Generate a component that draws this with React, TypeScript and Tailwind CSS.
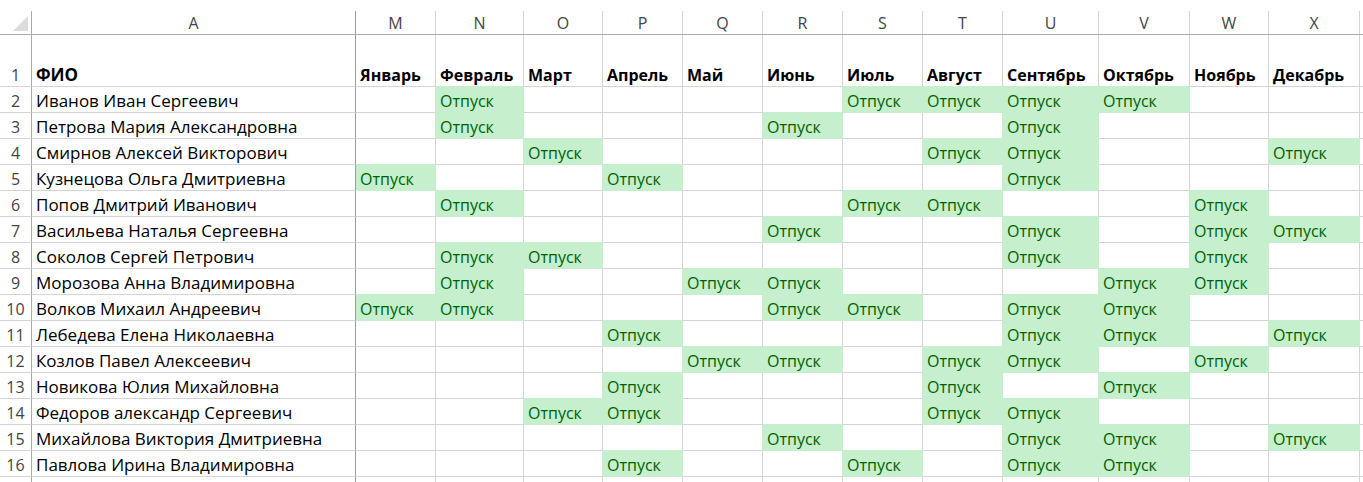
import React from "react";

type ColKey = "M" | "N" | "O" | "P" | "Q" | "R" | "S" | "T" | "U" | "V" | "W" | "X";

const columns: { key: ColKey; month: string; width: string }[] = [
  { key: "M", month: "Январь", width: "w-[80px]" },
  { key: "N", month: "Февраль", width: "w-[88px]" },
  { key: "O", month: "Март", width: "w-[79px]" },
  { key: "P", month: "Апрель", width: "w-[80px]" },
  { key: "Q", month: "Май", width: "w-[80px]" },
  { key: "R", month: "Июнь", width: "w-[80px]" },
  { key: "S", month: "Июль", width: "w-[80px]" },
  { key: "T", month: "Август", width: "w-[80px]" },
  { key: "U", month: "Сентябрь", width: "w-[96px]" },
  { key: "V", month: "Октябрь", width: "w-[91px]" },
  { key: "W", month: "Ноябрь", width: "w-[79px]" },
  { key: "X", month: "Декабрь", width: "w-[91px]" },
];

const people: [string, ColKey[]][] = [
  ["Иванов Иван Сергеевич", ["N", "S", "T", "U", "V"]],
  ["Петрова Мария Александровна", ["N", "R", "U"]],
  ["Смирнов Алексей Викторович", ["O", "T", "U", "X"]],
  ["Кузнецова Ольга Дмитриевна", ["M", "P", "U"]],
  ["Попов Дмитрий Иванович", ["N", "S", "T", "W"]],
  ["Васильева Наталья Сергеевна", ["R", "U", "W", "X"]],
  ["Соколов Сергей Петрович", ["N", "O", "U", "W"]],
  ["Морозова Анна Владимировна", ["N", "Q", "R", "V", "W"]],
  ["Волков Михаил Андреевич", ["M", "N", "R", "S", "U", "V"]],
  ["Лебедева Елена Николаевна", ["P", "U", "V", "X"]],
  ["Козлов Павел Алексеевич", ["Q", "R", "T", "U", "W"]],
  ["Новикова Юлия Михайловна", ["P", "T", "V"]],
  ["Федоров александр Сергеевич", ["O", "P", "T", "U"]],
  ["Михайлова Виктория Дмитриевна", ["R", "U", "V", "X"]],
  ["Павлова Ирина Владимировна", ["P", "S", "U", "V"]],
];

const isOff = (row: number, col: number) =>
  row >= 0 && row < people.length && col >= 0 && col < columns.length && people[row][1].includes(columns[col].key);

function ColumnHeaders() {
  return (
    <div className="flex h-[24px] border-b border-[#ababab]">
      <div className="relative w-[32px] shrink-0 border-r border-[#ababab]">
        <svg className="absolute left-[13px] top-[5px]" width="15" height="15" viewBox="0 0 15 15">
          <polygon points="15,0 15,15 0,15" fill="#dcdcdc" />
        </svg>
      </div>
      <div className="flex w-[324px] shrink-0 items-center justify-center border-r border-[#9c9c9c] text-[#444]">A</div>
      {columns.map((c) => (
        <div key={c.key} className={`${c.width} flex shrink-0 items-center justify-center border-r border-[#d4d4d4] text-[#444]`}>
          {c.key}
        </div>
      ))}
      <div className="flex-1" />
    </div>
  );
}

function TitleRow() {
  return (
    <div className="flex h-[52px] font-bold text-black">
      <div className="flex w-[32px] shrink-0 items-end justify-center border-r border-b border-r-[#ababab] border-b-[#d4d4d4] pb-[1px] font-normal text-[#444]">
        1
      </div>
      <div className="flex w-[324px] shrink-0 items-end border-r border-b border-r-[#9c9c9c] border-b-[#d4d4d4] pb-[1px] pl-[4px] text-[17px]">
        ФИО
      </div>
      {columns.map((c, ci) => (
        <div
          key={c.key}
          className={`${c.width} flex shrink-0 items-end border-r border-b border-r-[#d4d4d4] pb-[1px] pl-[4px] whitespace-nowrap ${
            isOff(0, ci) ? "border-b-[#c6efce]" : "border-b-[#d4d4d4]"
          }`}
        >
          {c.month}
        </div>
      ))}
      <div className="flex-1 border-b border-[#d4d4d4]" />
    </div>
  );
}

function PersonRow({ index }: { index: number }) {
  const [name] = people[index];
  return (
    <div className="flex h-[26px]">
      <div className="flex w-[32px] shrink-0 items-end justify-center border-r border-b border-r-[#ababab] border-b-[#d4d4d4] pb-[1px] text-[#444]">
        {index + 2}
      </div>
      <div className="flex w-[324px] shrink-0 items-end border-r border-b border-r-[#9c9c9c] border-b-[#d4d4d4] pb-[1px] pl-[4px] whitespace-nowrap text-[17px] text-black">
        {name}
      </div>
      {columns.map((c, ci) => {
        const off = isOff(index, ci);
        const rightGreen = off || isOff(index, ci + 1);
        const bottomGreen = off || isOff(index + 1, ci);
        return (
          <div
            key={c.key}
            className={`${c.width} flex shrink-0 items-end border-r border-b pb-[1px] pl-[4px] whitespace-nowrap ${
              off ? "bg-[#c6efce] text-[#006100]" : "bg-white"
            } ${rightGreen ? "border-r-[#c6efce]" : "border-r-[#d4d4d4]"} ${
              bottomGreen ? "border-b-[#c6efce]" : "border-b-[#d4d4d4]"
            }`}
          >
            {off ? "Отпуск" : ""}
          </div>
        );
      })}
      <div className="flex-1 border-b border-[#d4d4d4]" />
    </div>
  );
}

function EmptyRow() {
  return (
    <div className="flex h-[26px]">
      <div className="w-[32px] shrink-0 border-r border-[#ababab]" />
      <div className="w-[324px] shrink-0 border-r border-[#9c9c9c]" />
      {columns.map((c) => (
        <div key={c.key} className={`${c.width} shrink-0 border-r border-[#d4d4d4]`} />
      ))}
      <div className="flex-1" />
    </div>
  );
}

export default function App() {
  return (
    <div className="h-[482px] w-[1363px] overflow-hidden bg-white pt-[11px] font-['Open_Sans',sans-serif] text-[16px] leading-[20px]">
      <ColumnHeaders />
      <TitleRow />
      {people.map((_, i) => (
        <PersonRow key={i} index={i} />
      ))}
      <EmptyRow />
    </div>
  );
}
